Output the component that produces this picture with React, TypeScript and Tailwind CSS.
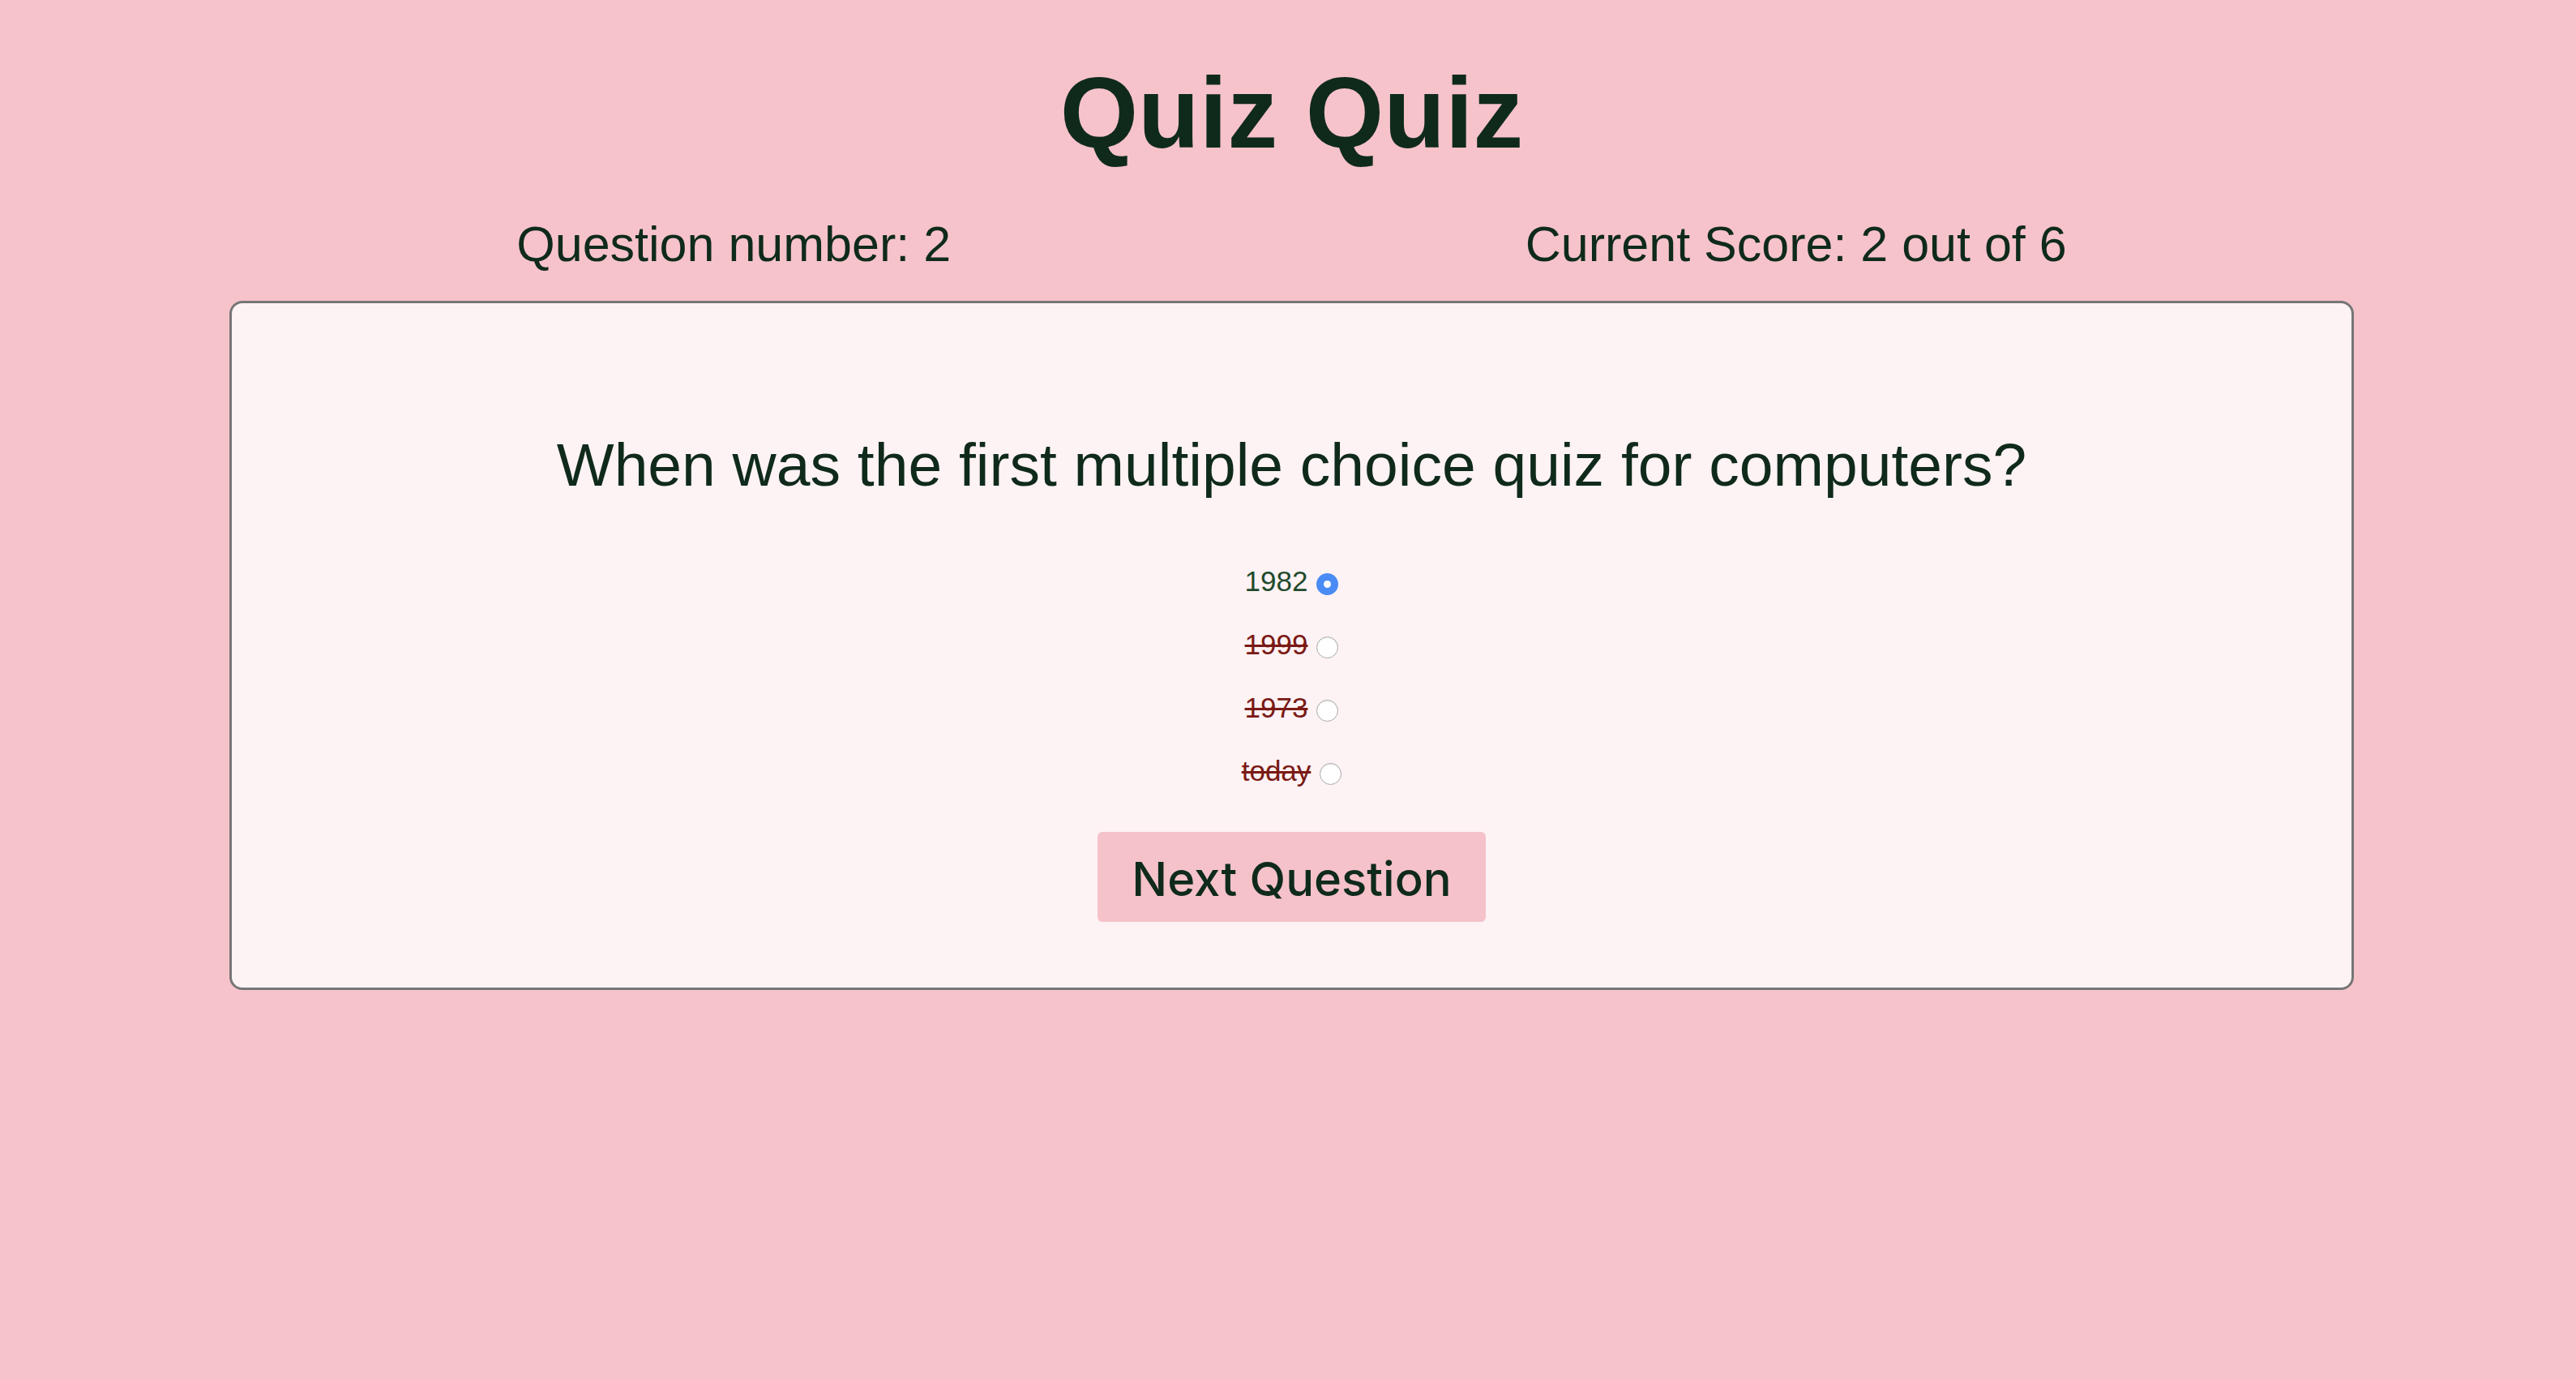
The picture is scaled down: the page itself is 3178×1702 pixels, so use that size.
const options = [
  { label: "1982", correct: true, checked: true },
  { label: "1999", correct: false, checked: false },
  { label: "1973", correct: false, checked: false },
  { label: "today", correct: false, checked: false },
];

function Radio({ checked }: { checked: boolean }) {
  if (checked) {
    return (
      <span className="mt-[8px] flex h-[27px] w-[27px] shrink-0 items-center justify-center rounded-full bg-[#4a8bf5]">
        <span className="h-[9px] w-[9px] rounded-full bg-white" />
      </span>
    );
  }
  return (
    <span className="mt-[8px] h-[27px] w-[27px] shrink-0 rounded-full border-[1.5px] border-[#aaaaaa] bg-white shadow-[inset_0_1px_2px_rgba(0,0,0,0.1)]" />
  );
}

export default function App() {
  return (
    <div className="min-h-[1702px] bg-[#f6c3cb] font-['Liberation_Sans',Arial,sans-serif] text-[#0f2a1b]">
      <div className="pl-[283px] pr-[274px]">
        {/* Title */}
        <h1 className="pt-[77px] text-center text-[124px] font-bold leading-[124px]">Quiz Quiz</h1>

        {/* Status row */}
        <div className="mt-[70px] flex justify-around text-[61px] leading-[60px]">
          <span>Question number: 2</span>
          <span>Current Score: 2 out of 6</span>
        </div>

        {/* Card */}
        <div className="mt-[40px] rounded-[16px] border-[3px] border-[#767676] bg-[#fdf2f4] pt-[161px] pb-[81px]">
          <p className="text-center text-[75px] leading-[77px]">
            When was the first multiple choice quiz for computers?
          </p>

          <div className="mt-[65px] flex flex-col">
            {options.map((o) => (
              <label key={o.label} className="flex h-[78px] items-center justify-center gap-[11px]">
                <span
                  className={`text-[35px] leading-none ${
                    o.correct ? "text-[#1f4a2c]" : "text-[#7a1a14] line-through"
                  }`}
                >
                  {o.label}
                </span>
                <Radio checked={o.checked} />
              </label>
            ))}
          </div>

          <div className="mt-[37px] flex justify-center">
            <button className="h-[111px] rounded-[6px] bg-[#f5c2ca] px-[42px] pt-[6px] font-['Inter',sans-serif] text-[58px] font-medium text-[#0f2a1b]">
              Next Question
            </button>
          </div>
        </div>
      </div>
    </div>
  );
}
